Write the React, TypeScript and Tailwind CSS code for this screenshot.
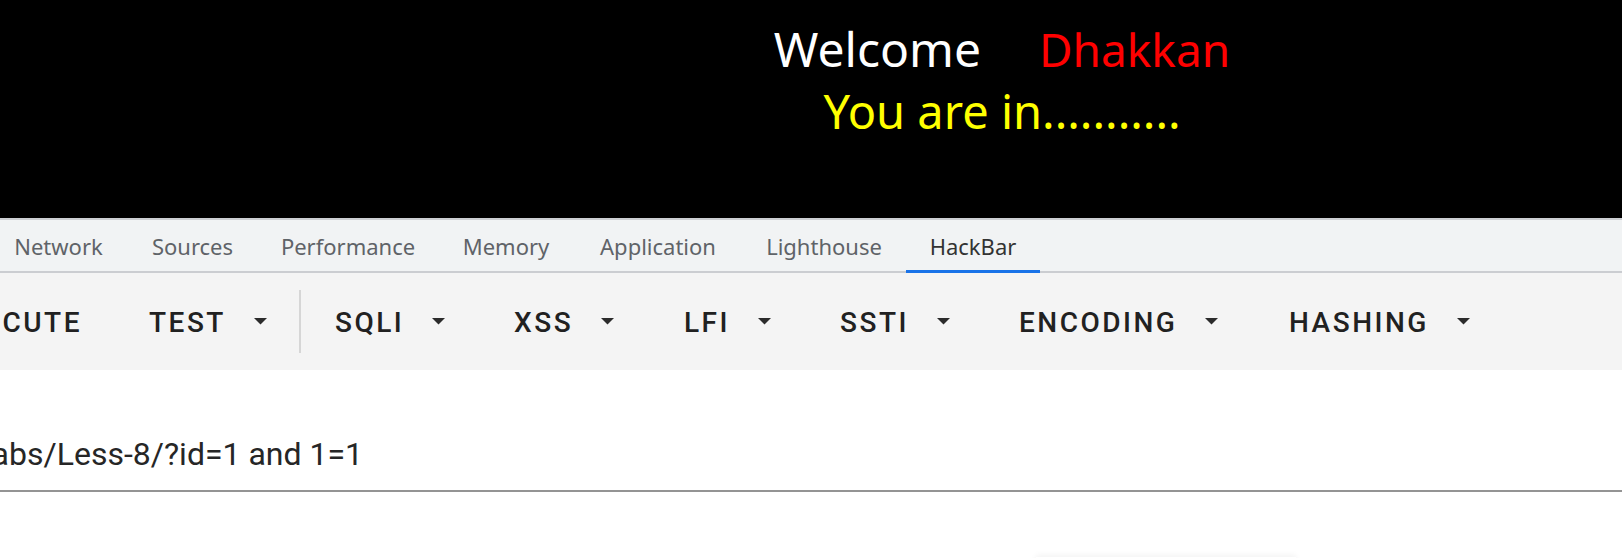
import React from "react";

const Arrow = () => (
  <svg width="13" height="7" viewBox="0 0 13 7" className="ml-[28px] shrink-0">
    <path d="M0 0 L13 0 L6.5 6.5 Z" fill="#2b2b2b" />
  </svg>
);

const tabs: { label: string; w: string; active?: boolean }[] = [
  { label: "Network", w: "w-[137px]" },
  { label: "Sources", w: "w-[131px]" },
  { label: "Performance", w: "w-[180px]" },
  { label: "Memory", w: "w-[136px]" },
  { label: "Application", w: "w-[168px]" },
  { label: "Lighthouse", w: "w-[164px]" },
  { label: "HackBar", w: "w-[134px]", active: true },
];

function Btn({ label, w, arrow = true }: { label: string; w: string; arrow?: boolean }) {
  return (
    <div className={`flex shrink-0 items-center ${w}`}>
      <span className="tracking-[2.5px] whitespace-nowrap pt-[2px]">{label}</span>
      {arrow && <Arrow />}
    </div>
  );
}

export default function App() {
  return (
    <div className="relative w-[1622px] h-[558px] overflow-hidden bg-white">
      {/* page content */}
      <div className="h-[218px] bg-black overflow-hidden">
        <div
          className="w-[2004px] text-center pt-[17px]"
          style={{ fontFamily: '"Noto Sans", sans-serif' }}
        >
          <div className="h-[63px] whitespace-nowrap text-[48px] leading-[63px]">
            <span className="text-white">Welcome</span>
            <span className="ml-[58px] text-[#ff0000] text-[46px]">Dhakkan</span>
          </div>
          <div className="h-[63px] text-[#ffff00] text-[47px] leading-[63px]">You are in...........</div>
        </div>
      </div>

      {/* devtools tab strip */}
      <div className="h-[2px] bg-[#cdcfd3]" />
      <div
        className="flex h-[53px] bg-[#f1f3f4] border-b-2 border-[#cbcdd1] text-[22px]"
        style={{ fontFamily: '"Noto Sans", sans-serif' }}
      >
        <div className="flex -ml-[10px]">
          {tabs.map((t) => (
            <div
              key={t.label}
              className={`relative flex shrink-0 items-center justify-center pt-[2px] ${t.w} ${
                t.active ? "text-[#333333]" : "text-[#5f6368]"
              }`}
            >
              {t.label}
              {t.active && (
                <span className="absolute left-0 right-0 -bottom-[2px] h-[3px] bg-[#1a73e8]" />
              )}
            </div>
          ))}
        </div>
      </div>

      {/* hackbar toolbar */}
      <div
        className="flex h-[97px] items-center bg-[#f4f4f4] text-[28px] font-medium text-[#212121]"
        style={{ fontFamily: "Roboto, sans-serif" }}
      >
        <div className="flex w-[82px] shrink-0 justify-end">
          <span className="tracking-[2.5px] whitespace-nowrap pt-[2px]">EXECUTE</span>
        </div>
        <div className="ml-[67px] flex items-center">
          <Btn label="TEST" w="w-[150px]" />
        </div>
        <div className="h-[63px] w-[2px] shrink-0 bg-[#d6d6d6]" />
        <div className="ml-[34px] flex items-center">
          <Btn label="SQLI" w="w-[179px]" />
          <Btn label="XSS" w="w-[170px]" />
          <Btn label="LFI" w="w-[156px]" />
          <Btn label="SSTI" w="w-[179px]" />
          <Btn label="ENCODING" w="w-[270px]" />
          <Btn label="HASHING" w="w-[200px]" />
        </div>
      </div>

      {/* url field */}
      <div className="pt-[64px] pb-[16px] border-b-2 border-[#949494]">
        <div
          className="flex w-[363px] justify-end whitespace-nowrap text-[32px] leading-[40px] text-[#262626]"
          style={{ fontFamily: "Roboto, sans-serif" }}
        >
          <span>http://127.0.0.1/sqli-labs/Less-8/?id=1 and 1=1</span>
        </div>
      </div>

      {/* faint popup shadow at bottom edge */}
      <div className="absolute left-[1036px] top-[557px] w-[260px] h-[40px] bg-white shadow-[0_-2px_6px_rgba(0,0,0,0.05)]" />
    </div>
  );
}
